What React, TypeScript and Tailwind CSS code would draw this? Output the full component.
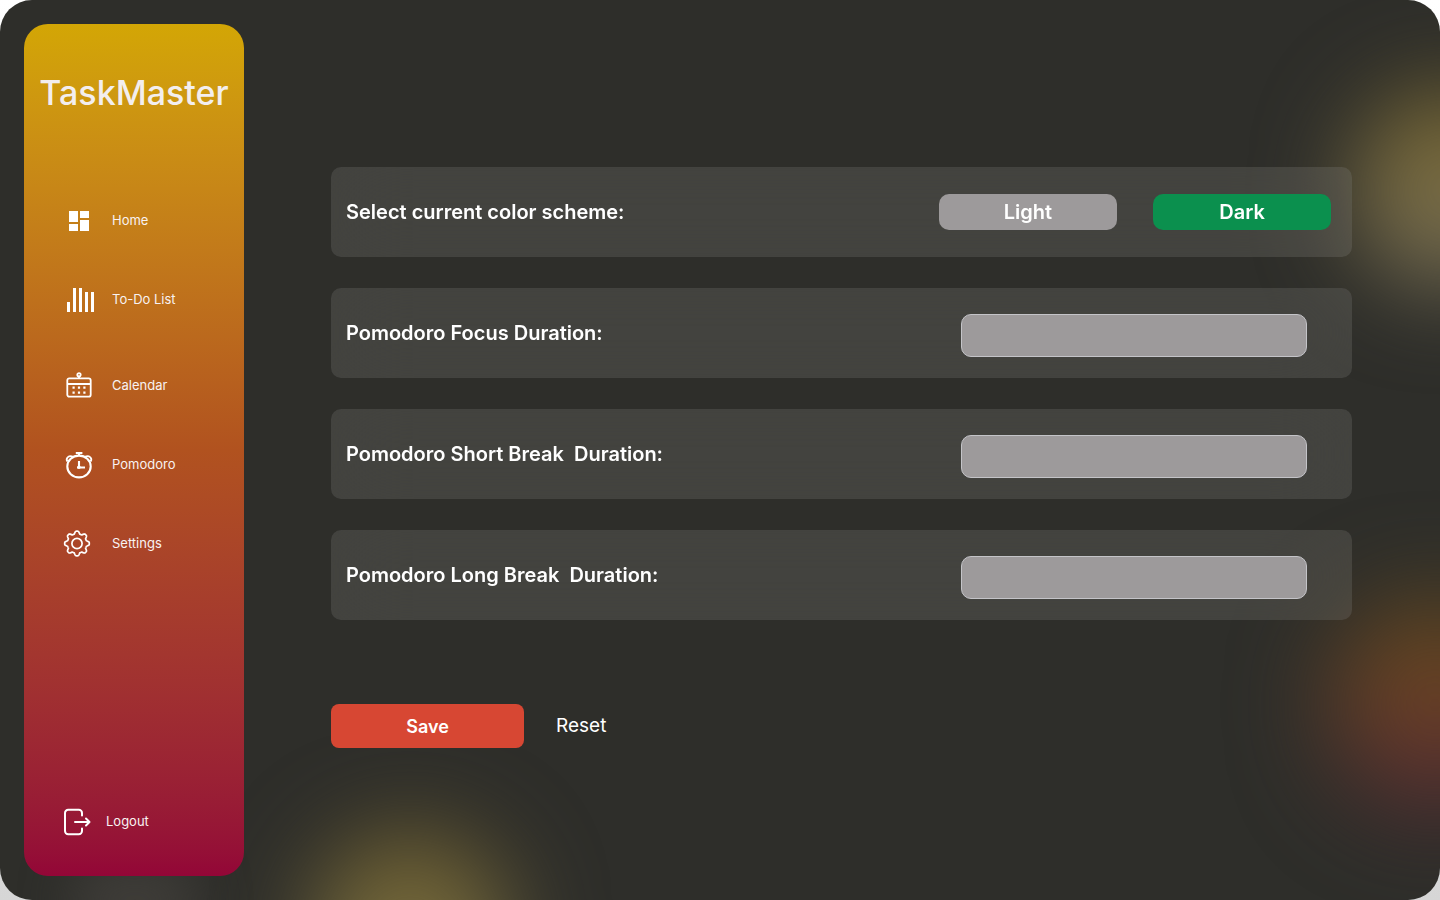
import { useState, type ReactNode } from "react";

function HomeIcon() {
  return (
    <svg className="size-7" viewBox="0 0 28 28" fill="white" aria-hidden="true">
      <path d="M5 4h9v11H5zM16 4h9v7h-9zM5 17h9v7H5zM16 13h9v11h-9z" />
    </svg>
  );
}

function ListIcon() {
  return (
    <svg className="size-7 overflow-visible" viewBox="0 0 28 28" fill="white" aria-hidden="true">
      <path d="M3 16h3v10H3zM9 2h3v24H9zM15 2h3v24h-3zM21 6h3v20h-3zM27 6h3v20h-3z" />
    </svg>
  );
}

function CalendarIcon() {
  return (
    <svg className="size-7" viewBox="0 0 28 28" fill="none" stroke="white" strokeWidth="1.8" aria-hidden="true">
      <rect x="3.3" y="6.3" width="23.4" height="18.4" rx="2" />
      <path d="M3.3 12H26.700M15 4.500v2" />
      <circle cx="15" cy="2.800" r="1.700" />
      <path strokeWidth="2.200" d="M8.500 15.600h2.200m3.200 0h2.200m3.200 0h2.200M8.500 20.700h2.200m3.200 0h2.200m3.200 0h2.200" />
    </svg>
  );
}

function TimerIcon() {
  return (
    <svg className="size-7 overflow-visible" viewBox="0 0 28 28" fill="none" stroke="white" strokeWidth="2.1" aria-hidden="true">
      <ellipse cx="15" cy="15.500" rx="11.700" ry="10.900" />
      <path d="M11.800 2h6.600M15 2v3M15 10v6M13 16.500h8" />
      <path d="M3.400 10.500C1.200 7 5 3.800 9.200 5.900M26.600 10.500C28.800 7 25 3.800 20.800 5.900" strokeWidth="1.800" />
      <circle cx="15" cy="16.300" r="1.700" fill="white" stroke="none" />
    </svg>
  );
}

const gearOutline = Array.from({ length: 160 }, (_, i) => {
  const angle = (i / 160) * Math.PI * 2;
  const wave = Math.max(-1, Math.min(1, Math.cos(angle * 8) * 1.5));
  const radius = 11 + 1.3 * wave;
  return `${(13 + radius * Math.sin(angle)).toFixed(2)},${(13.5 - radius * Math.cos(angle)).toFixed(2)}`;
}).join(" ");

function GearIcon() {
  return (
    <svg className="size-7 overflow-visible" viewBox="0 0 28 28" fill="none" stroke="white" strokeWidth="1.7" strokeLinejoin="round" aria-hidden="true">
      <circle cx="13" cy="13.5" r="5.1" />
      <polygon points={gearOutline} />
    </svg>
  );
}

function LogoutIcon() {
  return (
    <svg className="size-7" viewBox="0 0 28 28" fill="none" stroke="white" strokeWidth="2" strokeLinecap="round" strokeLinejoin="round" aria-hidden="true">
      <path d="M18 7.500V5a3.200 3.200 0 0 0-3.200-3.200H4.200A3.200 3.200 0 0 0 1 5v18a3.200 3.200 0 0 0 3.200 3.200h10.600a3.200 3.200 0 0 0 3.200-3.200v-2.500M11 14h14.500M22 10.500 25.500 14l-3.500 3.500" />
    </svg>
  );
}

function NavLink({ icon, children }: { icon: ReactNode; children: ReactNode }) {
  return (
    <a href="#" className="flex h-7 items-center gap-5 pl-10 text-[13px] text-[#f8f2f2]">
      {icon}
      <span>{children}</span>
    </a>
  );
}

function DurationRow({ id, label, value, onChange }: { id: string; label: string; value: string; onChange: (v: string) => void }) {
  return (
    <div className="flex h-[90px] items-center justify-between rounded-[10px] bg-white/10 pr-[45px] pl-[15px] text-white backdrop-blur-[40px]">
      <label htmlFor={id} className="text-xl font-semibold whitespace-pre">{label}</label>
      <input
        id={id}
        type="text"
        value={value}
        onChange={(e) => onChange(e.target.value)}
        className="mt-1 h-[43px] w-[346px] rounded-[10px] border border-[#c4c4c8] bg-[#9d9a9b] px-4"
      />
    </div>
  );
}

export default function App() {
  const [dark, setDark] = useState(true);
  const [durations, setDurations] = useState(["", "", ""]);
  const rows = ["Pomodoro Focus Duration:", "Pomodoro Short Break  Duration:", "Pomodoro Long Break  Duration:"];
  const scheme = (active: boolean) =>
    active
      ? "h-9 w-[178px] rounded-[10px] bg-[#0b904e] text-xl leading-none font-semibold text-white"
      : "h-9 w-[178px] rounded-[10px] bg-[#9d9a9b] text-xl leading-none font-semibold text-white";

  return (
    <div className="min-h-screen bg-linear-to-b from-white to-[#d6d6d6] font-['Inter','Liberation_Sans',sans-serif]">
      <div className="relative isolate flex min-h-screen overflow-hidden rounded-[32px] bg-[#2e2e2a] p-6">
        <div className="absolute top-[90px] -right-[110px] -z-10 size-[200px] rounded-full bg-linear-to-b from-[#7b692c] to-[#736c57] blur-[46px]" />
        <div className="absolute top-[600px] -right-[100px] -z-10 size-[210px] rounded-full bg-linear-to-b from-[#624c1c] via-[#6b3f25] to-[#532636] blur-[48px]" />
        <div className="absolute -bottom-[130px] left-[310px] -z-10 size-[200px] rounded-full bg-linear-to-b from-[#6d5d2d] to-[#7c754a] blur-[46px]" />
        <div className="absolute -bottom-10 left-[70px] -z-10 h-20 w-[130px] rounded-full bg-[#3e3c38] blur-[24px]" />

        <aside className="flex w-[220px] shrink-0 flex-col rounded-3xl bg-linear-to-b from-[#d3a605] via-[#b1521f] to-[#930637] pb-10">
          <h1 className="pt-[48px] text-center text-[34px] leading-[42px] font-medium text-[#f3eeee]">TaskMaster</h1>
          <nav className="mt-[93px] flex flex-col gap-[58px]">
            <div className="flex flex-col gap-[51px]">
              <NavLink icon={<HomeIcon />}>Home</NavLink>
              <NavLink icon={<ListIcon />}>To-Do List</NavLink>
            </div>
            <div className="flex flex-col gap-[51px]">
              <NavLink icon={<CalendarIcon />}>Calendar</NavLink>
              <NavLink icon={<TimerIcon />}>Pomodoro</NavLink>
              <NavLink icon={<GearIcon />}>Settings</NavLink>
            </div>
          </nav>
          <a href="#" className="mt-auto flex h-7 items-center gap-[14px] pl-10 text-[13px] text-[#f8f2f2]">
            <LogoutIcon />
            Logout
          </a>
        </aside>

        <main className="flex flex-1 flex-col gap-[31px] pt-[143px] pr-16 pl-[87px]">
          <div className="flex h-[90px] items-center justify-between rounded-[10px] bg-white/10 pr-[21px] pl-[15px] text-white backdrop-blur-[40px]">
            <span className="text-xl font-semibold">Select current color scheme:</span>
            <div className="flex gap-9">
              <button type="button" onClick={() => setDark(false)} className={scheme(!dark)}>Light</button>
              <button type="button" onClick={() => setDark(true)} className={scheme(dark)}>Dark</button>
            </div>
          </div>
          {rows.map((label, i) => (
            <DurationRow
              key={label}
              id={`duration-${i}`}
              label={label}
              value={durations[i]}
              onChange={(v) => setDurations(durations.map((d, j) => (j === i ? v : d)))}
            />
          ))}
          <div className="mt-[53px] flex items-center gap-8">
            <button type="button" className="h-11 w-[193px] rounded-lg bg-[#d74733] pt-[2px] text-lg font-semibold text-white">Save</button>
            <button type="button" onClick={() => setDurations(["", "", ""])} className="text-[19px] text-white">Reset</button>
          </div>
        </main>
      </div>
    </div>
  );
}
